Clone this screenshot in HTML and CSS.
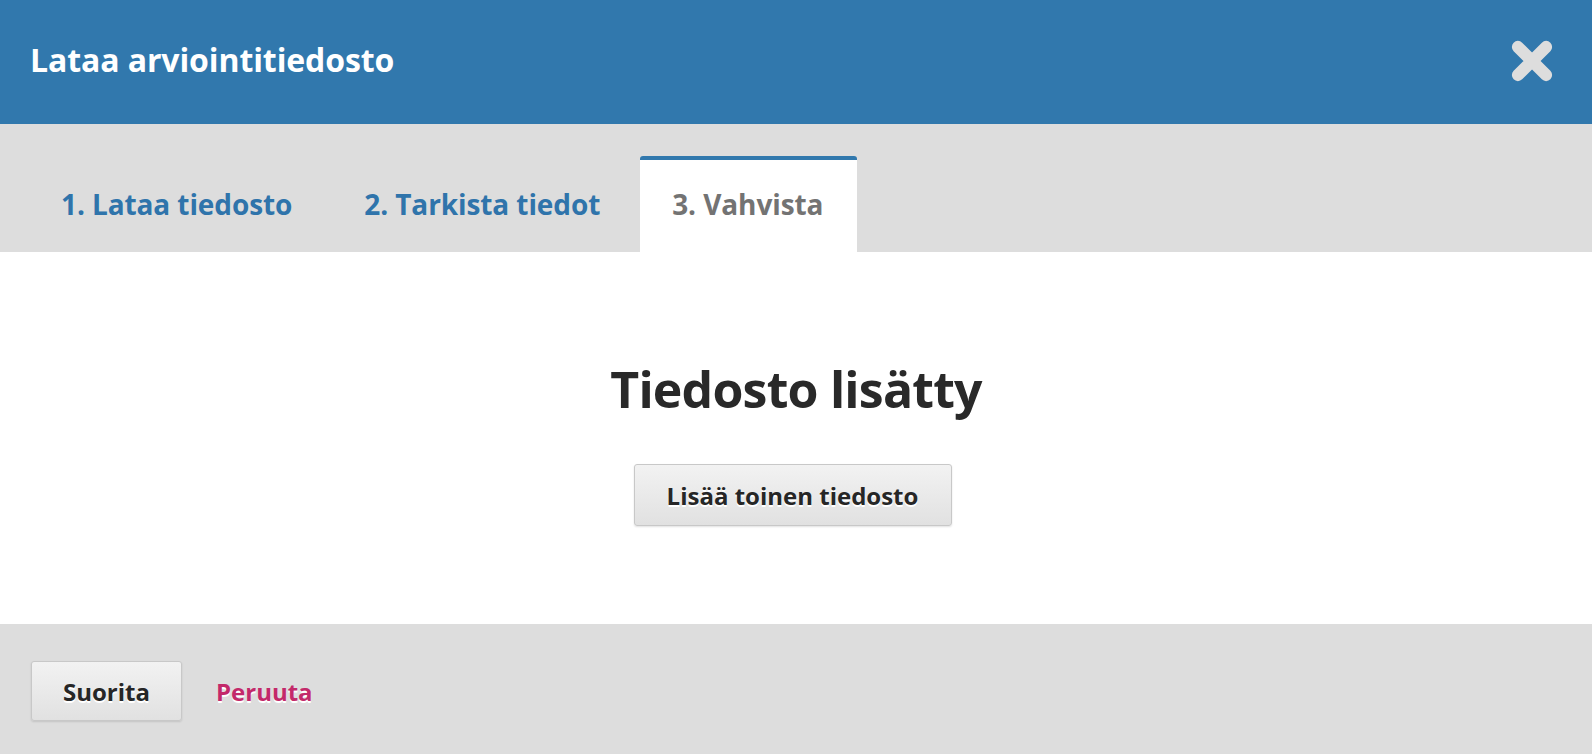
FILE: index.html
```html
<!DOCTYPE html>
<html lang="fi">
<head>
<meta charset="utf-8">
<title>Lataa arviointitiedosto</title>
<link rel="stylesheet" href="styles.css">
</head>
<body>
<div class="modal">
  <header class="modal-header">
    <h1 class="modal-title">Lataa arviointitiedosto</h1>
    <button class="close" type="button" aria-label="Sulje">
      <svg width="46" height="46" viewBox="0 0 44 44" aria-hidden="true">
        <path d="M8.5 8.5 L35.5 35.5 M35.5 8.5 L8.5 35.5" stroke="#dddddd" stroke-width="11.5" stroke-linecap="round"/>
      </svg>
    </button>
  </header>
  <nav class="tabs">
    <a class="tab" href="#">1. Lataa tiedosto</a>
    <a class="tab" href="#">2. Tarkista tiedot</a>
    <a class="tab active" href="#">3. Vahvista</a>
  </nav>
  <main class="content">
    <h2 class="done">Tiedosto lisätty</h2>
    <button class="btn btn-add" type="button">Lisää toinen tiedosto</button>
  </main>
  <footer class="modal-footer">
    <button class="btn btn-submit" type="button">Suorita</button>
    <a class="cancel" href="#">Peruuta</a>
  </footer>
</div>
</body>
</html>
```
FILE: styles.css
```css
* { box-sizing: border-box; }
html, body { margin: 0; padding: 0; }
body {
  font-family: "Open Sans", "Noto Sans", sans-serif;
  background: #fff;
  width: 1592px;
  height: 754px;
  overflow: hidden;
}
.modal {
  display: flex;
  flex-direction: column;
  height: 754px;
}
.modal-header {
  height: 124px;
  background: #3178ad;
  display: flex;
  align-items: center;
  justify-content: space-between;
  padding: 0 37px 5px 30px;
}
.modal-title {
  margin: 0;
  color: #fff;
  font-size: 32px;
  font-weight: 700;
  letter-spacing: -0.1px;
}
.close {
  border: 0;
  background: none;
  padding: 0;
  width: 46px;
  height: 46px;
  margin-top: 2px;
  cursor: pointer;
}
.close svg { display: block; }
.tabs {
  height: 128px;
  background: #dddddd;
  display: flex;
  align-items: flex-end;
  padding-left: 29px;
  gap: 8px;
}
.tab {
  height: 96px;
  display: flex;
  align-items: center;
  padding: 0 32px 4px;
  font-size: 28px;
  font-weight: 700;
  letter-spacing: -0.1px;
  color: #2f74ab;
  text-decoration: none;
  border-top: 4px solid transparent;
  border-radius: 3px 3px 0 0;
}
.tab.active {
  background: #fff;
  border-top-color: #3178ad;
  color: #737373;
  padding-right: 34px;
}
.content {
  height: 372px;
  display: flex;
  flex-direction: column;
  align-items: center;
  padding-top: 112px;
}
.done {
  margin: 0;
  font-size: 50px;
  font-weight: 700;
  line-height: 1;
  color: #292929;
  letter-spacing: -0.8px;
}
.btn {
  font-family: "Open Sans", "Noto Sans", sans-serif;
  font-weight: 700;
  color: #262626;
  background: linear-gradient(#f2f2f2, #e1e1e1);
  border: 1px solid #c8c8c8;
  border-radius: 3px;
  box-shadow: 0 1px 2px rgba(0,0,0,0.12);
  text-shadow: 0 2px 0 #fff;
  cursor: pointer;
}
.btn-add {
  margin: 50px 7px 0 0;
  width: 318px;
  height: 62px;
  font-size: 24px;
}
.modal-footer {
  flex: 1;
  background: #dddddd;
  display: flex;
  align-items: center;
  padding: 4px 0 0 31px;
  gap: 34px;
}
.btn-submit {
  width: 151px;
  height: 60px;
  font-size: 24px;
}
.cancel {
  color: #c3296a;
  font-size: 24px;
  font-weight: 700;
  text-decoration: none;
  text-shadow: 0 2px 0 #fff;
}
```
